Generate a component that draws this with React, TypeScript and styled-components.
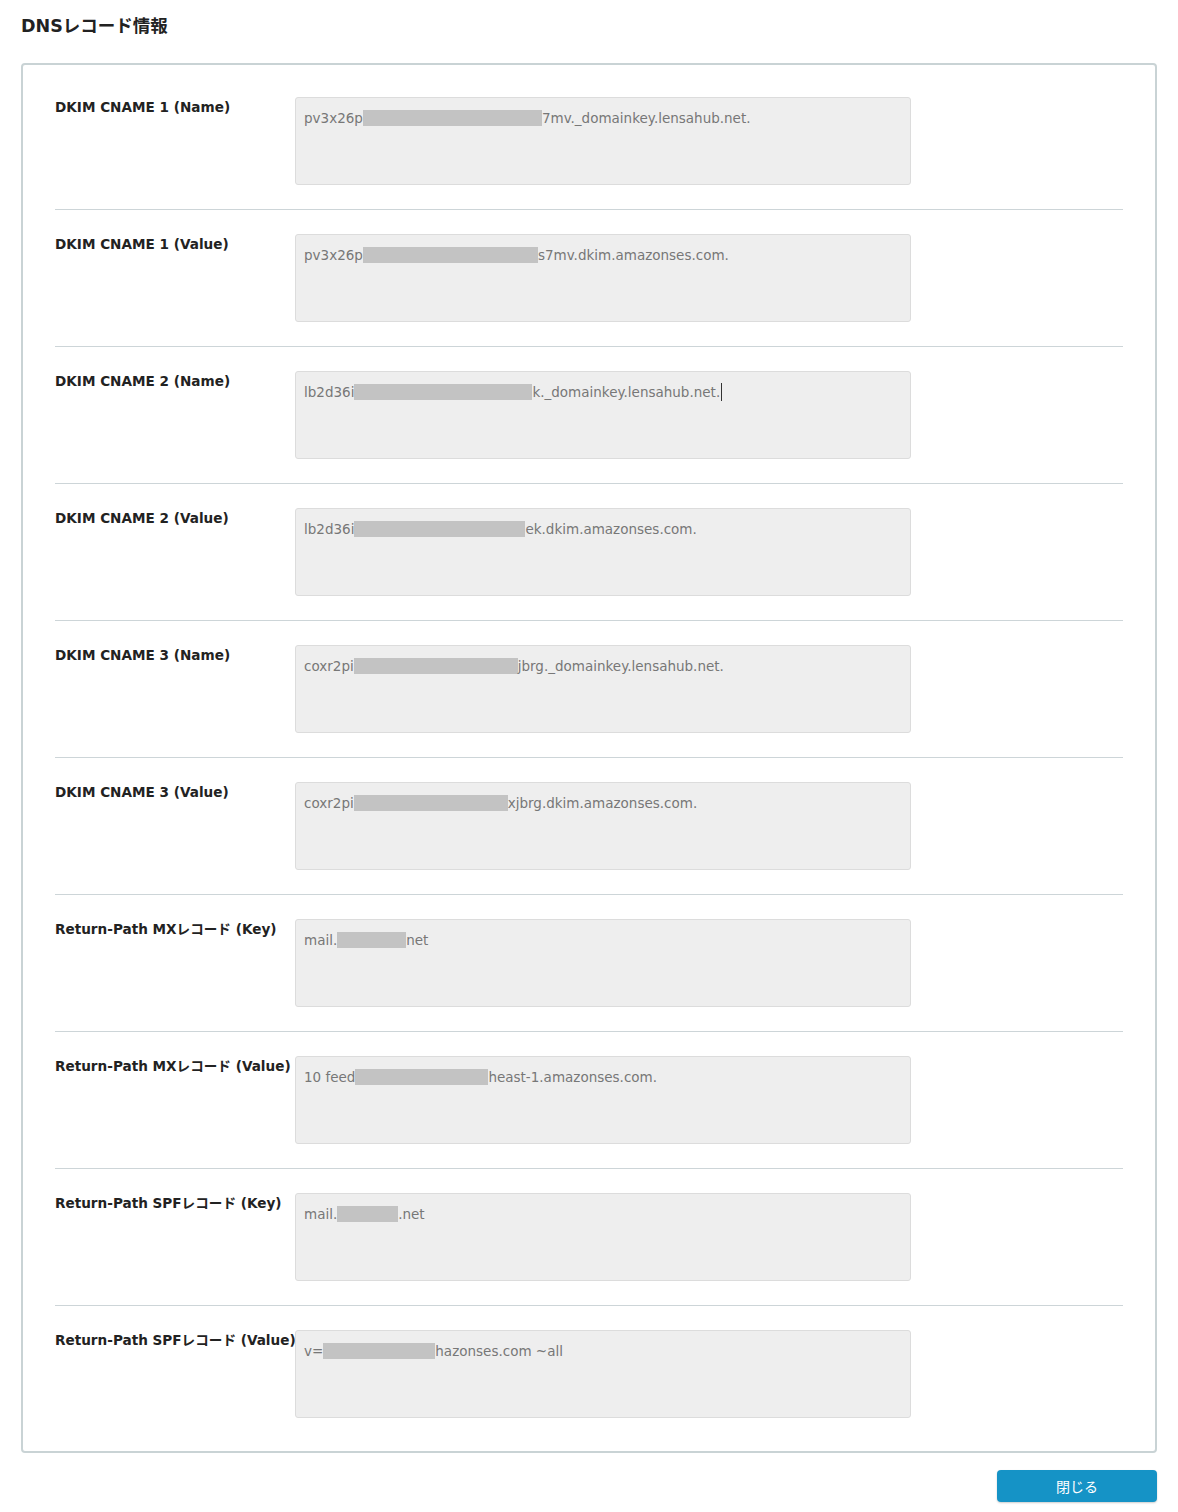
import React from 'react';
import styled, { createGlobalStyle } from 'styled-components';

const Global = createGlobalStyle`
  body {
    margin: 0;
    background: #fff;
    font-family: "DejaVu Sans", "Noto Sans CJK JP", sans-serif;
    color: #222;
  }
`

const Page = styled.div`
  padding: 0 21px 10px;
`

const Title = styled.h2`
  margin: 0;
  padding-top: 14px;
  font-size: 17.5px;
  line-height: 24px;
  font-weight: bold;
  color: #222;
  margin-bottom: 25px;
`

const Card = styled.div`
  border: 2px solid #c9d3d5;
  border-radius: 4px;
  padding: 32px 32px 33px;
`

const Row = styled.div`
  display: flex;
  align-items: flex-start;
  padding: 24px 0;
  border-bottom: 1px solid #cdd5d8;

  &:first-child { padding-top: 0; }
  &:last-child { padding-bottom: 0; border-bottom: none; }
`

const Label = styled.div`
  width: 240px;
  flex-shrink: 0;
  font-size: 13.6px;
  line-height: 20px;
  font-weight: bold;
  color: #222;
  white-space: nowrap;
`

const Field = styled.div`
  width: 616px;
  height: 88px;
  box-sizing: border-box;
  background: #eeeeee;
  border: 1px solid #dcdcdc;
  border-radius: 3px;
  padding: 10px 8px 8px;
  font-size: 13.5px;
  line-height: 20px;
  color: #777;
  white-space: nowrap;
`

const Mask = styled.span<{ $w: number }>`
  display: inline-block;
  width: ${p => p.$w}px;
  height: 16px;
  background: #c3c3c3;
  vertical-align: -3px;
`

const Caret = styled.span`
  display: inline-block;
  width: 1px;
  height: 18px;
  background: #333;
  vertical-align: -4px;
  margin-left: 1px;
`

const Footer = styled.div`
  display: flex;
  justify-content: flex-end;
  margin-top: 17px;
`

const CloseButton = styled.button`
  width: 160px;
  height: 32px;
  border: none;
  border-radius: 4px;
  background: #1593c6;
  color: #fff;
  font-family: "Noto Sans CJK JP", sans-serif;
  font-size: 14px;
  box-shadow: 0 1px 2px rgba(0, 0, 0, 0.2);
  cursor: pointer;
`

type Rec = { label: string; pre: string; mask: number; post: string; caret?: boolean }

const records: Rec[] = [
  { label: 'DKIM CNAME 1 (Name)', pre: 'pv3x26p', mask: 179, post: '7mv._domainkey.lensahub.net.' },
  { label: 'DKIM CNAME 1 (Value)', pre: 'pv3x26p', mask: 175, post: 's7mv.dkim.amazonses.com.' },
  { label: 'DKIM CNAME 2 (Name)', pre: 'lb2d36i', mask: 178, post: 'k._domainkey.lensahub.net.', caret: true },
  { label: 'DKIM CNAME 2 (Value)', pre: 'lb2d36i', mask: 171, post: 'ek.dkim.amazonses.com.' },
  { label: 'DKIM CNAME 3 (Name)', pre: 'coxr2pi', mask: 164, post: 'jbrg._domainkey.lensahub.net.' },
  { label: 'DKIM CNAME 3 (Value)', pre: 'coxr2pi', mask: 154, post: 'xjbrg.dkim.amazonses.com.' },
  { label: 'Return-Path MXレコード (Key)', pre: 'mail.', mask: 69, post: 'net' },
  { label: 'Return-Path MXレコード (Value)', pre: '10 feed', mask: 133, post: 'heast-1.amazonses.com.' },
  { label: 'Return-Path SPFレコード (Key)', pre: 'mail.', mask: 61, post: '.net' },
  { label: 'Return-Path SPFレコード (Value)', pre: 'v=', mask: 112, post: 'hazonses.com ~all' },
]

const App = () => {
  return <Page>
    <Global />
    <Title>DNSレコード情報</Title>
    <Card>
      {records.map(r => (
        <Row key={r.label}>
          <Label>{r.label}</Label>
          <Field>
            {r.pre}<Mask $w={r.mask} />{r.post}{r.caret && <Caret />}
          </Field>
        </Row>
      ))}
    </Card>
    <Footer>
      <CloseButton>閉じる</CloseButton>
    </Footer>
  </Page>
}

export default App
